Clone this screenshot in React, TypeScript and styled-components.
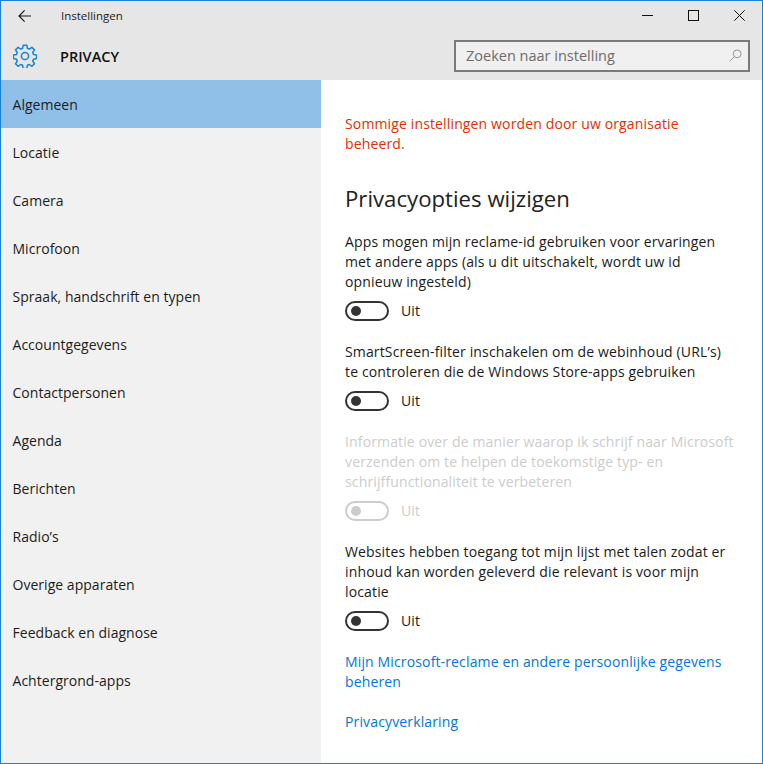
import React from 'react';
import styled, { createGlobalStyle } from 'styled-components';

const GlobalStyle = createGlobalStyle`
  html, body {
    margin: 0;
    padding: 0;
    background: #fff;
  }
  * {
    box-sizing: border-box;
  }
`;

const Window = styled.div`
  width: 763px;
  height: 764px;
  border: 1px solid #1883d7;
  display: flex;
  flex-direction: column;
  overflow: hidden;
  font-family: 'Open Sans', 'Liberation Sans', sans-serif;
  font-size: 14px;
  color: #1a1a1a;
`;

const Header = styled.header`
  height: 79px;
  flex: none;
  background: #e6e6e6;
  display: flex;
  flex-direction: column;
`;

const TitleBar = styled.div`
  height: 29px;
  display: flex;
  align-items: center;
`;

const BackButton = styled.div`
  width: 48px;
  height: 29px;
  display: flex;
  align-items: center;
  justify-content: center;
`;

const WindowTitle = styled.span`
  margin-left: 12px;
  font-size: 11.5px;
  color: #222;
`;

const WindowControls = styled.div`
  margin-left: auto;
  display: flex;
`;

const WindowButton = styled.div`
  width: 46px;
  height: 29px;
  display: flex;
  align-items: center;
  justify-content: center;
`;

const PageBar = styled.div`
  flex: 1;
  display: flex;
  align-items: center;
  padding: 2px 12px 0 12px;
`;

const PageTitle = styled.h1`
  margin: 0 0 0 23px;
  font-size: 14.5px;
  font-weight: 600;
  color: #111;
`;

const SearchBox = styled.div`
  margin-left: auto;
  width: 296px;
  height: 32px;
  border: 2px solid #7a7a7a;
  background: #f0f0f0;
  display: flex;
  align-items: center;
  padding: 0 6px 2px 10px;
  font-size: 14.5px;
  color: #6d6d6d;
`;

const SearchIcon = styled.svg`
  margin-left: auto;
`;

const Body = styled.div`
  flex: 1;
  display: flex;
  min-height: 0;
`;

const Sidebar = styled.nav`
  width: 320px;
  flex: none;
  background: #f1f1f1;
`;

const NavItem = styled.div<{ $active?: boolean }>`
  height: 48px;
  display: flex;
  align-items: center;
  padding-left: 11.5px;
  letter-spacing: 0.03px;
  background: ${p => (p.$active ? '#90c0e8' : 'transparent')};
  color: #1c1c1c;
`;

const Content = styled.main`
  flex: 1;
  padding: 34px 24px 0;
  line-height: 20px;
  letter-spacing: 0.14px;
`;

const Notice = styled.p`
  margin: 0;
  width: 370px;
  color: #e13000;
`;

const Heading = styled.h2`
  margin: 29px 0 -3px;
  font-size: 22.2px;
  line-height: 32px;
  font-weight: 400;
  letter-spacing: 0;
  color: #222;
`;

const Setting = styled.section`
  margin-top: 20px;
`;

const Description = styled.p<{ $disabled?: boolean }>`
  margin: 0;
  color: ${p => (p.$disabled ? '#cccccc' : '#1a1a1a')};
`;

const ToggleRow = styled.div<{ $disabled?: boolean }>`
  margin-top: 8px;
  height: 22px;
  display: flex;
  align-items: center;
  gap: 12px;
  color: ${p => (p.$disabled ? '#cccccc' : '#1a1a1a')};
`;

const Track = styled.span<{ $disabled?: boolean }>`
  width: 44px;
  height: 20px;
  border: 2px solid ${p => (p.$disabled ? '#cccccc' : '#333333')};
  border-radius: 10px;
  display: flex;
  align-items: center;
  padding-left: 4px;
`;

const Knob = styled.span<{ $disabled?: boolean }>`
  width: 10px;
  height: 10px;
  border-radius: 50%;
  background: ${p => (p.$disabled ? '#cccccc' : '#333333')};
`;

const LinkText = styled.a<{ $gap: number }>`
  display: block;
  margin-top: ${p => p.$gap}px;
  color: #0078d7;
  text-decoration: none;
`;

const navItems = [
  'Algemeen',
  'Locatie',
  'Camera',
  'Microfoon',
  'Spraak, handschrift en typen',
  'Accountgegevens',
  'Contactpersonen',
  'Agenda',
  'Berichten',
  'Radio’s',
  'Overige apparaten',
  'Feedback en diagnose',
  'Achtergrond-apps',
];

const settings = [
  {
    lines: [
      'Apps mogen mijn reclame-id gebruiken voor ervaringen',
      'met andere apps (als u dit uitschakelt, wordt uw id',
      'opnieuw ingesteld)',
    ],
  },
  {
    lines: [
      'SmartScreen-filter inschakelen om de webinhoud (URL’s)',
      'te controleren die de Windows Store-apps gebruiken',
    ],
  },
  {
    disabled: true,
    lines: [
      'Informatie over de manier waarop ik schrijf naar Microsoft',
      'verzenden om te helpen de toekomstige typ- en',
      'schrijffunctionaliteit te verbeteren',
    ],
  },
  {
    lines: [
      'Websites hebben toegang tot mijn lijst met talen zodat er',
      'inhoud kan worden geleverd die relevant is voor mijn',
      'locatie',
    ],
  },
];

function GearIcon() {
  return (
    <svg width="24" height="24" viewBox="0 0 24 24" fill="none" stroke="#1883d7" strokeWidth="1.5">
      <circle cx="12" cy="12" r="3.6" />
      <path
        strokeLinejoin="round"
        d="M10.2 1.2h3.6l.6 3.1 1.9.8 2.6-1.8 2.6 2.6-1.8 2.6.8 1.9 3.1.6v3.6l-3.1.6-.8 1.9 1.8 2.6-2.6 2.6-2.6-1.8-1.9.8-.6 3.1h-3.6l-.6-3.1-1.9-.8-2.6 1.8-2.6-2.6 1.8-2.6-.8-1.9-3.1-.6v-3.6l3.1-.6.8-1.9-1.8-2.6 2.6-2.6 2.6 1.8 1.9-.8z"
      />
    </svg>
  );
}

function App() {
  return (
    <Window>
      <GlobalStyle />
      <Header>
        <TitleBar>
          <BackButton>
            <svg width="14" height="14" viewBox="0 0 14 14" fill="none" stroke="#111" strokeWidth="1.1">
              <path d="M13 7H1.2M6.6 1.4 1 7l5.6 5.6" />
            </svg>
          </BackButton>
          <WindowTitle>Instellingen</WindowTitle>
          <WindowControls>
            <WindowButton>
              <svg width="11" height="11" viewBox="0 0 11 11" stroke="#111" strokeWidth="1">
                <path d="M0 5.5h11" />
              </svg>
            </WindowButton>
            <WindowButton>
              <svg width="11" height="11" viewBox="0 0 11 11" fill="none" stroke="#111" strokeWidth="1">
                <rect x="0.5" y="0.5" width="10" height="10" />
              </svg>
            </WindowButton>
            <WindowButton>
              <svg width="11" height="11" viewBox="0 0 11 11" stroke="#111" strokeWidth="1">
                <path d="M0.3 0.3l10.4 10.4M10.7 0.3 0.3 10.7" />
              </svg>
            </WindowButton>
          </WindowControls>
        </TitleBar>
        <PageBar>
          <GearIcon />
          <PageTitle>PRIVACY</PageTitle>
          <SearchBox>
            Zoeken naar instelling
            <SearchIcon width="13" height="13" viewBox="0 0 14 14" fill="none" stroke="#8f8f8f" strokeWidth="1">
              <circle cx="8.8" cy="5.2" r="4.2" />
              <path d="M5.8 8.2 0.8 13.2" />
            </SearchIcon>
          </SearchBox>
        </PageBar>
      </Header>
      <Body>
        <Sidebar>
          {navItems.map((item, i) => (
            <NavItem key={item} $active={i === 0}>
              {item}
            </NavItem>
          ))}
        </Sidebar>
        <Content>
          <Notice>Sommige instellingen worden door uw organisatie beheerd.</Notice>
          <Heading>Privacyopties wijzigen</Heading>
          {settings.map(s => (
            <Setting key={s.lines[0]}>
              <Description $disabled={s.disabled}>
                {s.lines.map(line => (
                  <div key={line}>{line}</div>
                ))}
              </Description>
              <ToggleRow $disabled={s.disabled}>
                <Track $disabled={s.disabled}>
                  <Knob $disabled={s.disabled} />
                </Track>
                Uit
              </ToggleRow>
            </Setting>
          ))}
          <LinkText $gap={20}>
            Mijn Microsoft-reclame en andere persoonlijke gegevens
            <br />
            beheren
          </LinkText>
          <LinkText $gap={20}>Privacyverklaring</LinkText>
        </Content>
      </Body>
    </Window>
  );
}

export default App;
